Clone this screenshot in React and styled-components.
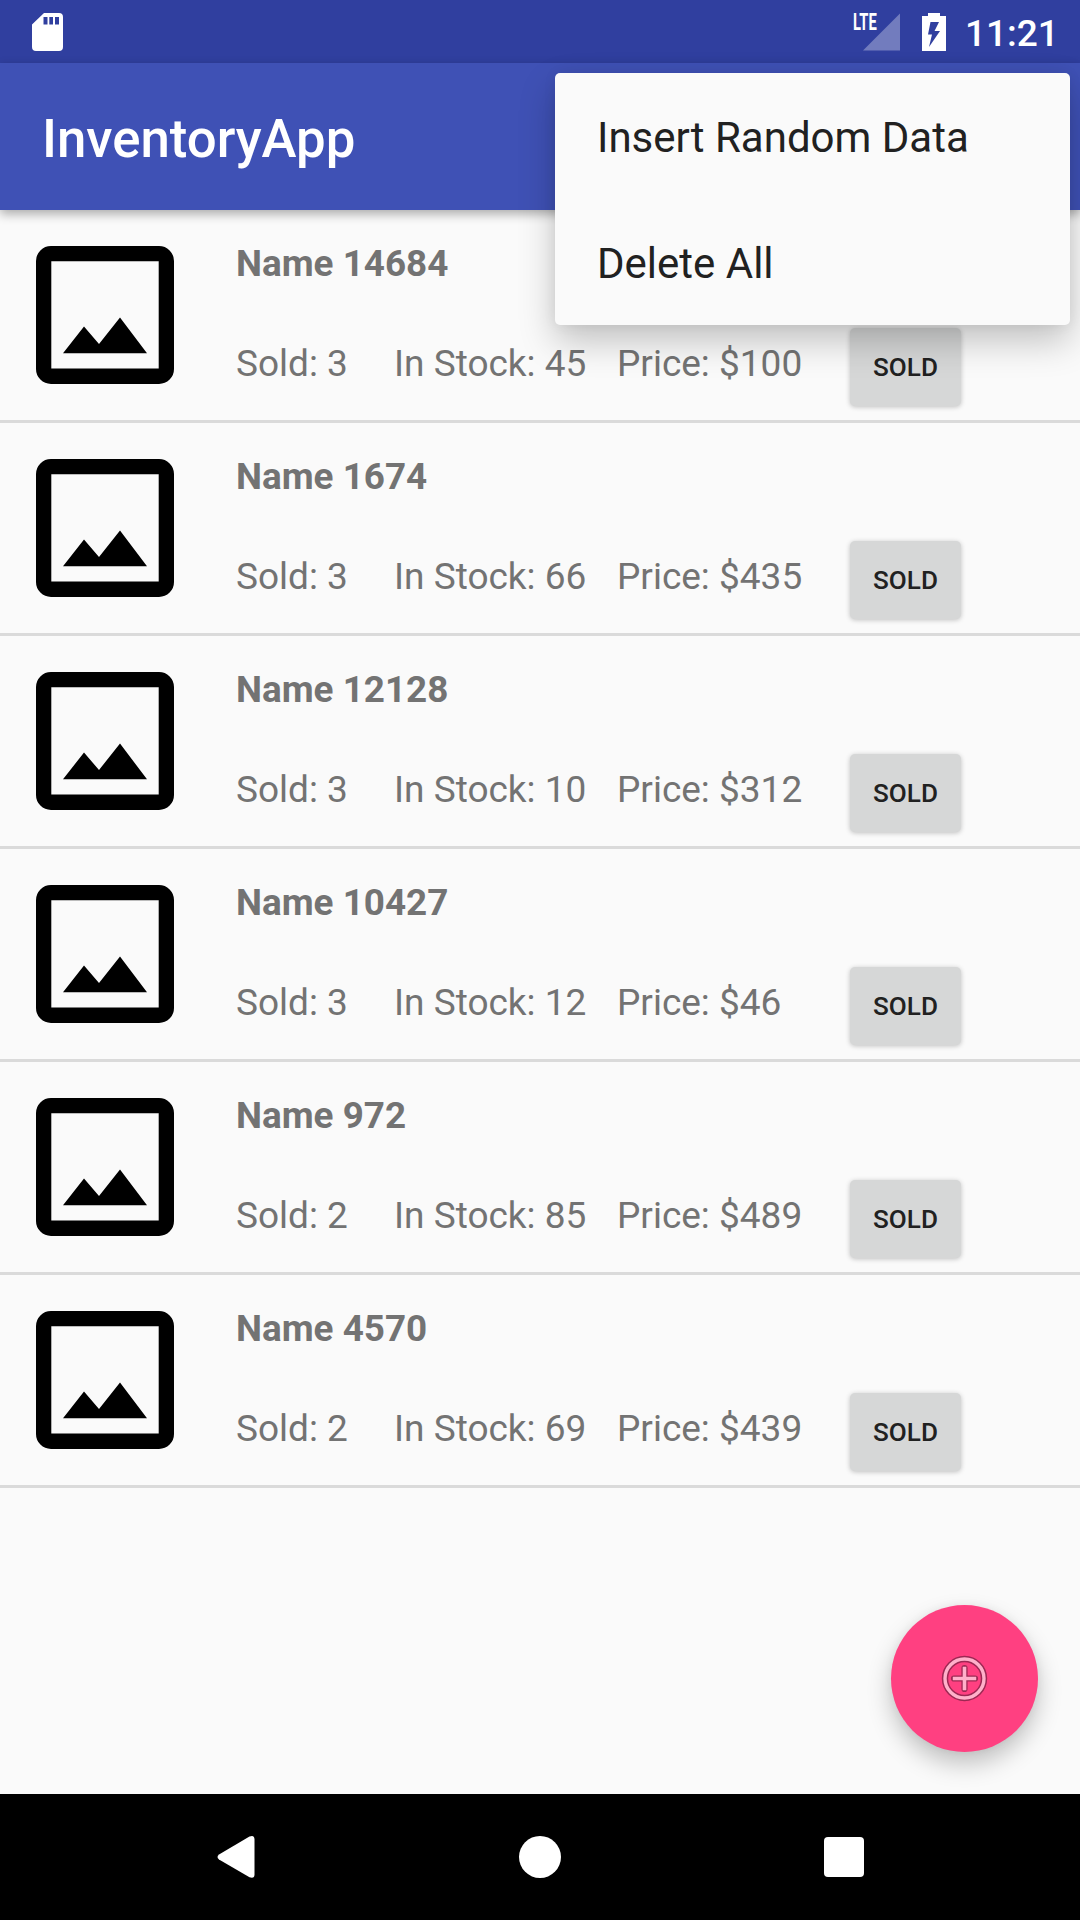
import React from 'react';
import styled, { createGlobalStyle } from 'styled-components';

const GlobalStyle = createGlobalStyle`
  * { box-sizing: border-box; }
  body { margin: 0; background: #fafafa; font-family: Roboto, sans-serif; }
  svg { display: block; flex: none; }
`;

const Screen = styled.div`
  position: relative;
  display: flex;
  flex-direction: column;
  width: 1080px;
  height: 1920px;
  overflow: hidden;
  background: #fafafa;
`;

const StatusBar = styled.header`
  display: flex;
  align-items: center;
  justify-content: space-between;
  flex: none;
  height: 63px;
  padding: 0 0 0 32px;
  background: #303f9f;
`;

const StatusIcons = styled.div`
  display: flex;
  align-items: center;
  width: 226px;
`;

const Signal = styled.div`
  position: relative;
  width: 46px;
  height: 38px;
  margin-right: 22px;
  padding-left: 9px;
`;

const NetworkLabel = styled.span`
  position: absolute;
  left: -1px;
  top: 0;
  color: #fff;
  font-size: 23px;
  font-weight: 700;
  line-height: 20px;
  transform: scaleX(0.64);
  transform-origin: left;
`;

const Clock = styled.time`
  margin-left: 19px;
  padding-top: 4px;
  color: #fff;
  font-size: 37px;
  font-weight: 500;
  line-height: 44px;
`;

const Toolbar = styled.div`
  display: flex;
  align-items: center;
  flex: none;
  height: 147px;
  padding: 5px 42px 0;
  background: #3f51b5;
  box-shadow: 0 4px 10px rgba(0, 0, 0, 0.32);
`;

const Title = styled.h1`
  margin: 0;
  color: #fff;
  font-size: 52.75px;
  font-weight: 500;
  line-height: 62px;
`;

const List = styled.ul`
  flex: 1;
  margin: 0;
  padding: 0;
  list-style: none;
`;

const Row = styled.li`
  display: flex;
  height: 213px;
  padding: 32px 0 0 36px;
  border-bottom: 3px solid #dadada;
`;

const Picture = styled.div`
  width: 138px;
  margin-right: 62px;
  padding-top: 4px;
`;

const Details = styled.div`
  flex: 1;
`;

const Name = styled.div`
  height: 43px;
  color: #737373;
  font-size: 36.85px;
  font-weight: 700;
  line-height: 43px;
`;

const Stats = styled.div`
  display: grid;
  grid-template-columns: 158px 223px 233px 112px;
  margin-top: 43px;
`;

const Stat = styled.span`
  padding-top: 14px;
  color: #737373;
  font-size: 37px;
  line-height: 43px;
  white-space: nowrap;
`;

const SoldButton = styled.button`
  width: 111px;
  height: 78px;
  padding: 0;
  border: 0;
  border-radius: 5px;
  background: #d6d7d7;
  box-shadow: 0 1px 5px rgba(0, 0, 0, 0.24);
  color: #212121;
  font-family: inherit;
  font-size: 26.1px;
  font-weight: 500;
  line-height: 78px;
`;

const Menu = styled.div`
  position: absolute;
  left: 555px;
  top: 73px;
  width: 515px;
  border-radius: 5px;
  background: #fafafa;
  box-shadow: 0 16px 36px rgba(0, 0, 0, 0.23), 0 0 14px rgba(0, 0, 0, 0.06);
`;

const MenuItem = styled.div`
  height: 126px;
  padding: 3px 42px 0;
  color: #212121;
  font-size: 42px;
  line-height: 123px;
  white-space: nowrap;
`;

const Fab = styled.button`
  position: absolute;
  right: 42px;
  bottom: 168px;
  display: grid;
  place-items: center;
  width: 147px;
  height: 147px;
  padding: 0;
  border: 0;
  border-radius: 50%;
  background: #ff4081;
  box-shadow: 0 12px 24px rgba(0, 0, 0, 0.23), 0 0 10px rgba(0, 0, 0, 0.05);
`;

const NavBar = styled.nav`
  display: grid;
  grid-template-columns: repeat(3, 304px);
  place-content: center;
  place-items: center;
  flex: none;
  height: 126px;
  background: #000;
`;

const items = [
  { name: 'Name 14684', sold: 3, stock: 45, price: 100 },
  { name: 'Name 1674', sold: 3, stock: 66, price: 435 },
  { name: 'Name 12128', sold: 3, stock: 10, price: 312 },
  { name: 'Name 10427', sold: 3, stock: 12, price: 46 },
  { name: 'Name 972', sold: 2, stock: 85, price: 489 },
  { name: 'Name 4570', sold: 2, stock: 69, price: 439 },
];

const SdCardIcon = () => (
  <svg width="31" height="38" viewBox="0 0 31 38">
    <path
      fill="#fff"
      fillRule="evenodd"
      d="M12 0H27a4 4 0 0 1 4 4V34a4 4 0 0 1-4 4H4a4 4 0 0 1-4-4V11.500ZM11.500 4V11.500H15.500V4ZM17.300 4V11.500H21V4ZM23 4V11.500H27V4Z"
    />
  </svg>
);

const SignalIcon = () => (
  <svg width="37" height="38" viewBox="0 0 37 38">
    <path d="M37 .5V37.500H0Z" fill="#fff" fillOpacity="0.32" />
  </svg>
);

const BatteryIcon = () => (
  <svg width="24" height="38" viewBox="0 0 24 38">
    <path fill="#fff" d="M6 0H18V3H24V38H0V3H6Z" />
    <path fill="#303f9f" d="M8.500 9H17L12.500 18H18L7 34 10 21.500H6Z" />
  </svg>
);

const PictureIcon = () => (
  <svg width="138" height="138" viewBox="0 0 138 138">
    <path
      fillRule="evenodd"
      d="M15 0H123A15 15 0 0 1 138 15V123A15 15 0 0 1 123 138H15A15 15 0 0 1 0 123V15A15 15 0 0 1 15 0ZM15.300 15.300V122.500H122.700V15.300Z"
    />
    <path d="M27 107.300 48 80.500 63 98 84 71.500 111 107.300Z" />
  </svg>
);

const AddIcon = () => (
  <svg width="47" height="47" viewBox="0 0 47 47" fill="none">
    <circle cx="23.500" cy="23.500" r="19.500" stroke="#9c2853" strokeWidth="6.400" />
    <circle cx="23.500" cy="23.500" r="19.500" stroke="#ffb0ca" strokeWidth="3.400" />
    <path d="M23.500 13V34M13 23.500H34" stroke="#9c2853" strokeWidth="6.200" strokeLinecap="round" />
    <path d="M23.500 11.800V35.200M11.800 23.500H35.200" stroke="#ffb0ca" strokeWidth="3.600" />
  </svg>
);

export default function App() {
  return (
    <>
      <GlobalStyle />
      <Screen>
        <StatusBar>
          <SdCardIcon />
          <StatusIcons>
            <Signal>
              <SignalIcon />
              <NetworkLabel>LTE</NetworkLabel>
            </Signal>
            <BatteryIcon />
            <Clock>11:21</Clock>
          </StatusIcons>
        </StatusBar>
        <Toolbar>
          <Title>InventoryApp</Title>
        </Toolbar>
        <List>
          {items.map((item) => (
            <Row key={item.name}>
              <Picture>
                <PictureIcon />
              </Picture>
              <Details>
                <Name>{item.name}</Name>
                <Stats>
                  <Stat>Sold: {item.sold}</Stat>
                  <Stat>In Stock: {item.stock}</Stat>
                  <Stat>Price: ${item.price}</Stat>
                  <SoldButton>SOLD</SoldButton>
                </Stats>
              </Details>
            </Row>
          ))}
        </List>
        <NavBar>
          <svg width="38" height="44" viewBox="0 0 38 44">
            <path fill="#fff" d="M32.500 1.500Q37.500 -.5 37.500 4.500V39.500Q37.500 44 32.500 42.300L2 24.500Q-1 22 2 19.500Z" />
          </svg>
          <svg width="42" height="42" viewBox="0 0 42 42">
            <circle cx="21" cy="21" r="21" fill="#fff" />
          </svg>
          <svg width="40" height="40" viewBox="0 0 40 40">
            <rect width="40" height="40" rx="4" fill="#fff" />
          </svg>
        </NavBar>
        <Menu>
          <MenuItem>Insert Random Data</MenuItem>
          <MenuItem>Delete All</MenuItem>
        </Menu>
        <Fab aria-label="Add">
          <AddIcon />
        </Fab>
      </Screen>
    </>
  );
}
